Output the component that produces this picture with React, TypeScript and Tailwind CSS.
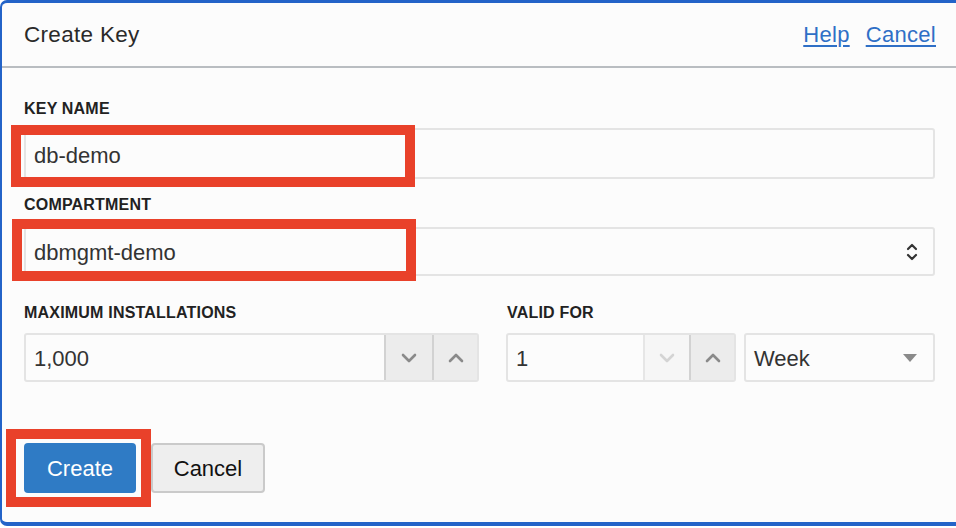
import React from "react";

const font = { fontFamily: '"Liberation Sans", Arial, Helvetica, sans-serif' };

function ChevronDown({ color }: { color: string }) {
  return (
    <svg width="16" height="10" viewBox="0 0 16 10" fill="none">
      <path d="M2 2 L8 8 L14 2" stroke={color} strokeWidth="2.6" strokeLinecap="round" strokeLinejoin="round" />
    </svg>
  );
}

function ChevronUp({ color }: { color: string }) {
  return (
    <svg width="16" height="10" viewBox="0 0 16 10" fill="none">
      <path d="M2 8 L8 2 L14 8" stroke={color} strokeWidth="2.6" strokeLinecap="round" strokeLinejoin="round" />
    </svg>
  );
}

function UpDown() {
  return (
    <svg width="12" height="22" viewBox="0 0 12 22" fill="none">
      <path d="M2 8 L6 4 L10 8" stroke="#333" strokeWidth="2.2" strokeLinecap="round" strokeLinejoin="round" />
      <path d="M2 14 L6 18 L10 14" stroke="#333" strokeWidth="2.2" strokeLinecap="round" strokeLinejoin="round" />
    </svg>
  );
}

export default function App() {
  return (
    <div className="w-[956px] h-[528px] bg-white" style={font}>
      <div className="h-[526px] bg-[#fcfcfc] border-t-[3px] border-l-[2px] border-b-[4px] border-r-0 border-[#2363c8] rounded-tl-[7px] rounded-bl-[7px] flex flex-col">
        {/* Header */}
        <div className="h-[65px] shrink-0 flex items-center justify-between pl-[22px] pr-[20px] border-b-2 border-[#b9bdc1]">
          <div className="text-[22.5px] leading-[26px] text-[#2a2a2a] tracking-[0.3px]">Create Key</div>
          <div className="flex items-center gap-[16px] text-[22px] leading-[26px] text-[#2f6fc6]">
            <span className="underline decoration-[2px] underline-offset-[3px] tracking-[0.3px]">Help</span>
            <span className="underline decoration-[2px] underline-offset-[3px] tracking-[0.3px]">Cancel</span>
          </div>
        </div>

        {/* Body */}
        <div className="pl-[22px] pr-[21px] pt-[31px] flex flex-col">
          <div className="text-[16px] leading-[20px] font-bold text-[#222] tracking-[0.2px]">KEY NAME</div>
          <div className="relative mt-[9px]">
            <div className="h-[51px] border-2 border-[#e4e4e4] rounded-[3px] bg-[#fcfcfc] flex items-center pl-[8px] pt-[4px] text-[22px] text-[#333]">
              db-demo
            </div>
            <span className="absolute left-[-13px] top-[-3px] w-[404px] h-[62px] border-[10px] border-[#e9412a] pointer-events-none" />
          </div>

          <div className="mt-[16px] text-[16px] leading-[20px] font-bold text-[#222] tracking-[0.2px]">COMPARTMENT</div>
          <div className="relative mt-[12px]">
            <div className="h-[49px] border-2 border-[#e4e4e4] rounded-[3px] bg-[#fcfcfc] flex items-center justify-between pl-[8px] pr-[15px] text-[22px] text-[#333]">
              <span className="pt-[2px]">dbmgmt-demo</span>
              <UpDown />
            </div>
            <span className="absolute left-[-12px] top-[-8px] w-[404px] h-[62px] border-[10px] border-[#e9412a] pointer-events-none" />
          </div>

          <div className="mt-[27px] grid grid-cols-[455px_1fr] gap-x-[27px]">
            <div className="flex flex-col">
              <div className="text-[16px] leading-[20px] font-bold text-[#222] tracking-[0.2px]">MAXIMUM INSTALLATIONS</div>
              <div className="mt-[10px] h-[49px] border-2 border-[#e4e4e4] rounded-[3px] bg-[#fcfcfc] flex">
                <div className="flex-1 flex items-center pl-[8px] pt-[1px] text-[22px] text-[#333]">1,000</div>
                <div className="w-[48px] border-l-2 border-[#d2d2d2] bg-[#ececec] flex items-center justify-center">
                  <ChevronDown color="#8a8a8a" />
                </div>
                <div className="w-[45px] border-l-2 border-[#d2d2d2] bg-[#ececec] flex items-center justify-center">
                  <ChevronUp color="#8a8a8a" />
                </div>
              </div>
            </div>
            <div className="flex flex-col">
              <div className="pl-[1px] text-[16px] leading-[20px] font-bold text-[#222] tracking-[0.2px]">VALID FOR</div>
              <div className="mt-[10px] flex gap-[8px]">
                <div className="w-[230px] h-[49px] border-2 border-[#e4e4e4] rounded-[3px] bg-[#fcfcfc] flex">
                  <div className="flex-1 flex items-center pl-[8px] pt-[1px] text-[22px] text-[#333]">1</div>
                  <div className="w-[46px] border-l-2 border-[#e6e6e6] bg-[#f6f6f6] flex items-center justify-center">
                    <ChevronDown color="#d4d4d4" />
                  </div>
                  <div className="w-[45px] border-l-2 border-[#d2d2d2] bg-[#ececec] flex items-center justify-center">
                    <ChevronUp color="#8a8a8a" />
                  </div>
                </div>
                <div className="flex-1 h-[49px] border-2 border-[#e4e4e4] rounded-[3px] bg-[#fcfcfc] flex items-center justify-between pl-[8px] pr-[16px] text-[22px] text-[#333]">
                  <span className="pt-[1px]">Week</span>
                  <svg width="14" height="8" viewBox="0 0 14 8">
                    <polygon points="0,0 14,0 7,8" fill="#8a8a8a" />
                  </svg>
                </div>
              </div>
            </div>
          </div>

          <div className="mt-[61px] flex gap-[15px]">
            <div className="relative">
              <div className="w-[112px] h-[50px] rounded-[4px] bg-[#2f7bc5] flex items-center justify-center pt-[1px] text-[22px] text-white">
                Create
              </div>
              <span className="absolute left-[-18px] top-[-14px] w-[145px] h-[78px] border-[10px] border-[#e9412a] pointer-events-none" />
            </div>
            <div className="w-[114px] h-[50px] rounded-[4px] bg-[#eeeeee] border-2 border-[#cacaca] flex items-center justify-center pt-[1px] text-[22px] text-[#111]">
              Cancel
            </div>
          </div>
        </div>
      </div>
    </div>
  );
}
